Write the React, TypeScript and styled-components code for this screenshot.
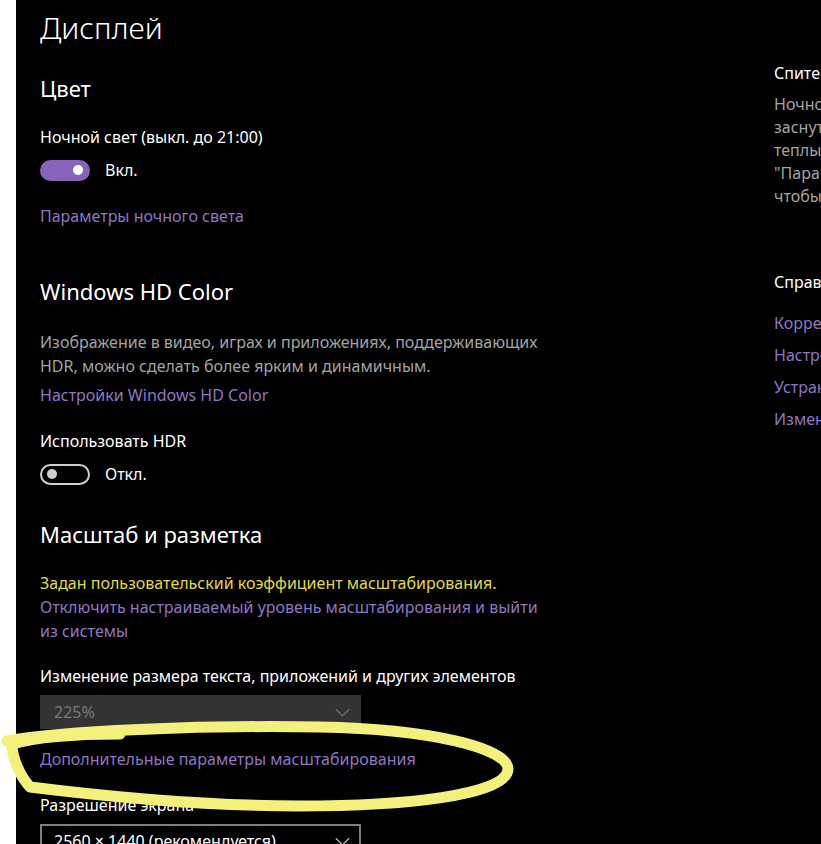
import React from 'react';
import styled, { createGlobalStyle } from 'styled-components';

const GlobalStyle = createGlobalStyle`
  html, body {
    margin: 0;
    padding: 0;
    background: #000;
    overflow: hidden;
  }
  body {
    font-family: "Segoe UI", "Noto Sans", "Open Sans", sans-serif;
    -webkit-font-smoothing: antialiased;
  }
`;

const ACCENT = '#8764b8';
const LINK = '#8f76c2';

const Page = styled.div`
  position: relative;
  display: flex;
  width: 821px;
  height: 844px;
  overflow: hidden;
  background: #000;
`;

const Strip = styled.div`
  flex: 0 0 16px;
  background: #fff;
`;

const Body = styled.div`
  flex: 1;
  display: grid;
  grid-template-columns: 734px 320px;
  padding-left: 24px;
  color: #fff;
`;

const Main = styled.main`
  display: flex;
  flex-direction: column;
  align-items: flex-start;
`;

const Title = styled.h1`
  margin: 8px 0 0;
  font-size: 30px;
  line-height: 40px;
  font-weight: 300;
`;

const SectionTitle = styled.h2<{ $gap: number }>`
  margin: ${(p) => p.$gap}px 0 0;
  font-size: 22px;
  line-height: 30px;
  font-weight: 400;
`;

const Label = styled.div<{ $gap: number }>`
  margin-top: ${(p) => p.$gap}px;
  font-size: 16px;
  line-height: 22px;
  white-space: nowrap;
`;

const Link = styled.a<{ $gap: number }>`
  display: block;
  margin-top: ${(p) => p.$gap}px;
  font-size: 16px;
  line-height: 22px;
  color: ${LINK};
  text-decoration: none;
  white-space: nowrap;
`;

const Text = styled.p<{ $gap: number }>`
  margin: ${(p) => p.$gap}px 0 0;
  font-size: 16px;
  line-height: 24px;
  color: #a3a3a3;
  width: 530px;
`;

const Notice = styled.div`
  margin-top: 22px;
  font-size: 16px;
  line-height: 24px;
  width: 512px;
`;

const Warn = styled.div`
  color: #e2da3c;
`;

const NoticeLink = styled.a`
  color: ${LINK};
  text-decoration: none;
`;

const ToggleRow = styled.div<{ $gap: number }>`
  display: flex;
  align-items: center;
  gap: 15px;
  margin-top: ${(p) => p.$gap}px;
  height: 22px;
  font-size: 16px;
`;

const Track = styled.span<{ $on: boolean }>`
  position: relative;
  box-sizing: border-box;
  width: 50px;
  height: 21px;
  border-radius: 11px;
  background: ${(p) => (p.$on ? ACCENT : 'transparent')};
  border: 2px solid ${(p) => (p.$on ? ACCENT : '#cfcfcf')};
`;

const Knob = styled.span<{ $on: boolean }>`
  position: absolute;
  top: 3.5px;
  left: ${(p) => (p.$on ? '31px' : '5px')};
  width: 10px;
  height: 10px;
  border-radius: 50%;
  background: ${(p) => (p.$on ? '#fff' : '#cfcfcf')};
`;

const Select = styled.div<{ $disabled?: boolean }>`
  box-sizing: border-box;
  display: flex;
  align-items: center;
  justify-content: space-between;
  margin-top: 8px;
  width: 321px;
  height: 34px;
  padding: 0 9px 0 12px;
  font-size: 16px;
  background: ${(p) => (p.$disabled ? '#333' : '#000')};
  border: 2px solid ${(p) => (p.$disabled ? '#333' : '#7f7f7f')};
  color: ${(p) => (p.$disabled ? '#777' : '#fff')};
`;

const Aside = styled.aside`
  display: flex;
  flex-direction: column;
  font-size: 16px;
  white-space: nowrap;
`;

const AsideTitle = styled.div<{ $gap: number }>`
  margin-top: ${(p) => p.$gap}px;
  line-height: 22px;
`;

const AsideText = styled.div`
  margin-top: 9px;
  line-height: 23px;
  color: #a3a3a3;
`;

const AsideLinks = styled.div`
  display: flex;
  flex-direction: column;
  gap: 10px;
  margin-top: 19px;
  line-height: 22px;
  color: ${LINK};
`;

const Scribble = styled.svg`
  position: absolute;
  left: 0;
  top: 0;
  pointer-events: none;
`;

const Chevron = ({ color }: { color: string }) => (
  <svg width="15" height="9" viewBox="0 0 15 9" aria-hidden="true">
    <polyline points="0.8,1.2 7.5,7.8 14.2,1.2" fill="none" stroke={color} strokeWidth="1.2" />
  </svg>
);

const Toggle = ({ on, label, gap }: { on: boolean; label: string; gap: number }) => (
  <ToggleRow $gap={gap}>
    <Track $on={on}>
      <Knob $on={on} />
    </Track>
    <span>{label}</span>
  </ToggleRow>
);

export default function App() {
  return (
    <Page>
      <GlobalStyle />
      <Strip />
      <Body>
        <Main>
          <Title>Дисплей</Title>
          <SectionTitle $gap={25}>Цвет</SectionTitle>
          <Label $gap={23}>Ночной свет (выкл. до 21:00)</Label>
          <Toggle on label="Вкл." gap={11} />
          <Link $gap={24}>Параметры ночного света</Link>

          <SectionTitle $gap={49}>Windows HD Color</SectionTitle>
          <Text $gap={24}>
            Изображение в видео, играх и приложениях, поддерживающих HDR, можно сделать более
            ярким и динамичным.
          </Text>
          <Link $gap={6}>Настройки Windows HD Color</Link>
          <Label $gap={24}>Использовать HDR</Label>
          <Toggle on={false} label="Откл." gap={11} />

          <SectionTitle $gap={34}>Масштаб и разметка</SectionTitle>
          <Notice>
            <Warn>Задан пользовательский коэффициент масштабирования.</Warn>
            <NoticeLink>Отключить настраиваемый уровень масштабирования и выйти из системы</NoticeLink>
          </Notice>
          <Label $gap={22}>Изменение размера текста, приложений и других элементов</Label>
          <Select $disabled>
            <span>225%</span>
            <Chevron color="#6f6f6f" />
          </Select>
          <Link $gap={19}>Дополнительные параметры масштабирования</Link>
          <Label $gap={24}>Разрешение экрана</Label>
          <Select>
            <span>2560 × 1440 (рекомендуется)</span>
            <Chevron color="#bdbdbd" />
          </Select>
        </Main>

        <Aside>
          <AsideTitle $gap={62}>Спите лучше</AsideTitle>
          <AsideText>
            Ночной свет поможет вам
            <br />
            заснуть, отображая более
            <br />
            теплые цвета ночью. Выберите
            <br />
            "Параметры ночного света",
            <br />
            чтобы настроить его.
          </AsideText>
          <AsideTitle $gap={63}>Справка из Интернета</AsideTitle>
          <AsideLinks>
            <span>Корректировка размера шрифта</span>
            <span>Настройка нескольких мониторов</span>
            <span>Устранение размытости приложений</span>
            <span>Изменение яркости экрана</span>
          </AsideLinks>
        </Aside>
      </Body>

      <Scribble width="821" height="844" viewBox="0 0 821 844" aria-hidden="true">
        <path
          d="M 7 741 C 60 731, 200 725, 320 727 C 430 729, 508 748, 508 769 C 508 796, 400 806, 300 806 C 200 806, 110 797, 30 787 C 20 776, 12 758, 12 744 C 40 736, 80 734, 120 734"
          fill="none"
          stroke="#f4f07c"
          strokeWidth="11"
          strokeLinecap="round"
          strokeLinejoin="round"
        />
      </Scribble>
    </Page>
  );
}
